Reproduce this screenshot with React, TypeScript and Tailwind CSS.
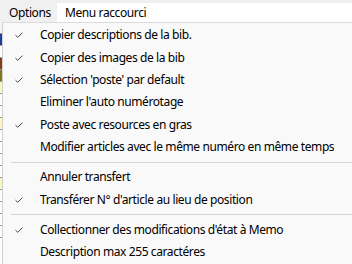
import React from 'react'

type Entry = { label: string; checked?: boolean } | 'sep'

const entries: Entry[] = [
  { label: 'Copier descriptions de la bib.', checked: true },
  { label: 'Copier des images de la bib', checked: true },
  { label: "Sélection 'poste' par default", checked: true },
  { label: "Eliminer l'auto numérotage" },
  { label: 'Poste avec resources en gras', checked: true },
  { label: 'Modifier articles avec le même numéro en même temps' },
  'sep',
  { label: 'Annuler transfert' },
  { label: "Transférer N° d'article au lieu de position", checked: true },
  'sep',
  { label: "Collectionner des modifications d'état à Memo", checked: true },
  { label: 'Description max 255 caractéres' },
]

function Check() {
  return (
    <svg width="8" height="6" viewBox="0 0 8 6" className="text-[#444]">
      <path d="M0.5 3.2 L2.8 5.3 L7.5 0.6" fill="none" stroke="currentColor" strokeWidth="1" />
    </svg>
  )
}

// the grid peeking out behind the popup
function BackStrip() {
  const cells = ['#f4f4f4', '#1f3fa0', '#fff', '#8b3a1a', '#7a7a1e', '#fbf6c0', '#fff', '#fff', '#fbf6c0', '#fff', '#fff', '#fff', '#fff', '#fbf6c0', '#fff', '#fff', '#fff', '#fff']
  return (
    <div className="w-[3px] flex flex-col bg-white border-r border-[#cfcfcf]">
      {cells.map((c, i) => (
        <div key={i} className="h-[12px] border-b border-[#9a9a9a]" style={{ background: c }} />
      ))}
    </div>
  )
}

export default function App() {
  return (
    <div
      className="w-[352px] h-[264px] overflow-hidden bg-[#f0f0f0] flex flex-col text-[12px] tracking-[-0.4px] text-black"
      style={{ fontFamily: '"Noto Sans", "Segoe UI", sans-serif' }}
    >
      <div className="h-[3px] bg-[#f0f0f0]" />
      <div className="h-[19px] bg-white flex items-center">
        <div className="h-full w-[57px] pl-[9px] flex items-center bg-[#f0f0f0]">Options</div>
        <div className="h-full pl-[8px] flex items-center">Menu raccourci</div>
      </div>
      <div className="flex-1 flex min-h-0">
        <BackStrip />
        <div className="flex-1 bg-[#f9f9f9] border-t border-[#dcdcdc] pt-[1px]">
          {entries.map((e, i) =>
            e === 'sep' ? (
              <div key={i} className="h-[7.6px] flex items-center pl-[8px]">
                <div className="h-px flex-1 bg-[#d6d6d6]" />
              </div>
            ) : (
              <div key={i} className="h-[22.4px] flex items-center">
                <div className="w-[37px] pl-[12px] flex items-center">{e.checked && <Check />}</div>
                <span className="whitespace-nowrap">{e.label}</span>
              </div>
            )
          )}
        </div>
      </div>
    </div>
  )
}
